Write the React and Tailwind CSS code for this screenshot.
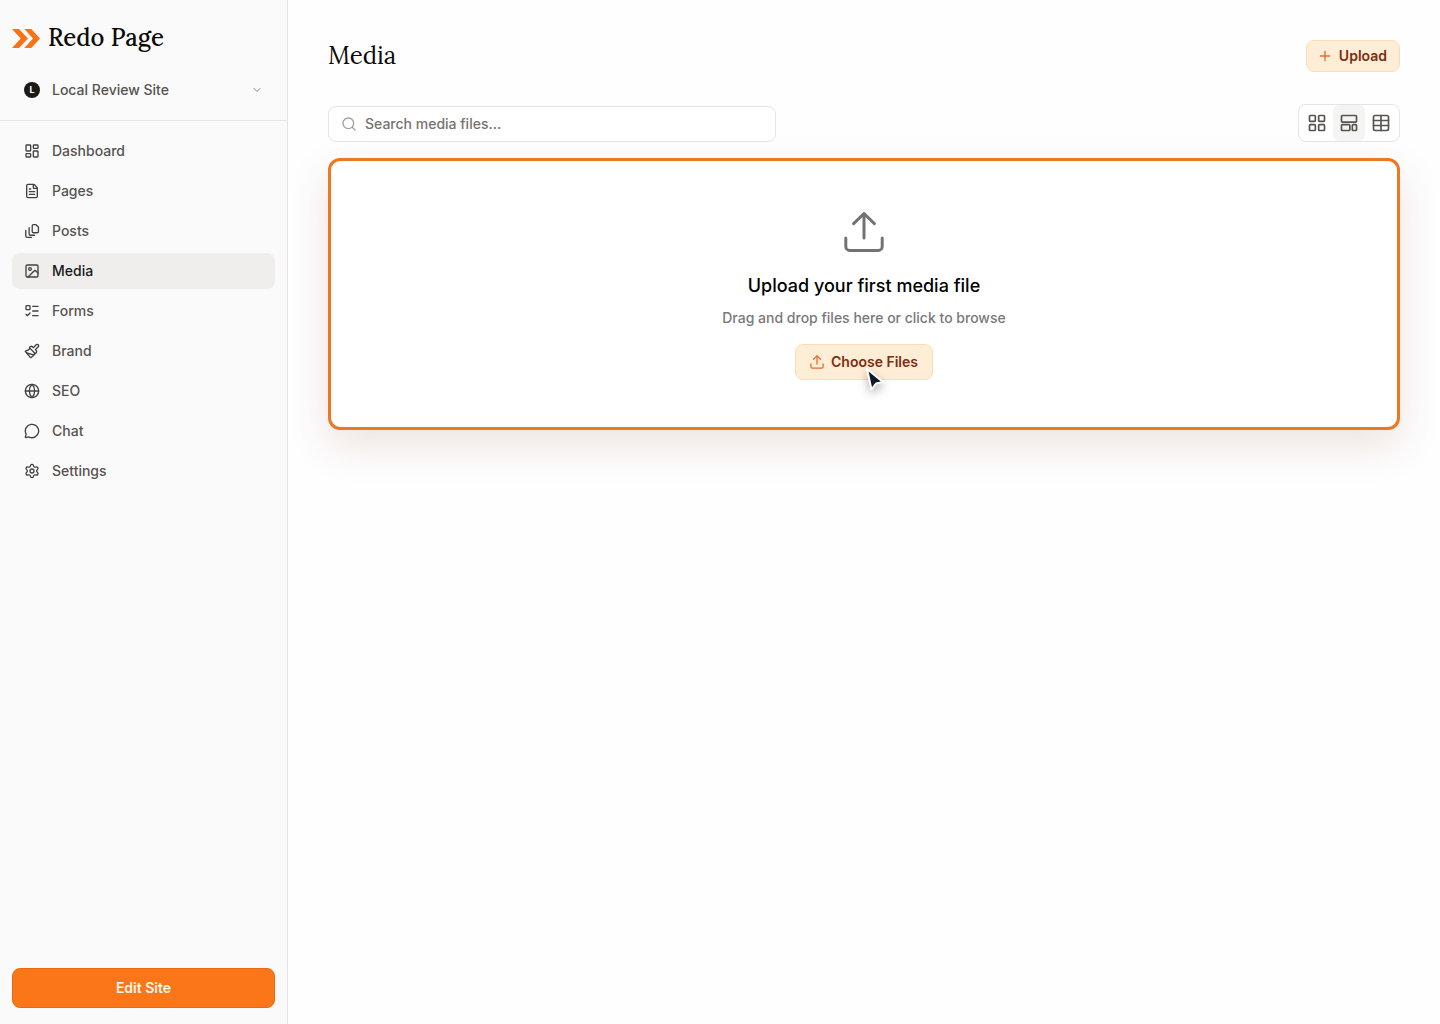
import React, { useState } from 'react';
import {
    ChevronDown,
    FileText,
    Globe,
    Image,
    LayoutDashboard,
    LayoutGrid,
    ListTodo,
    MessageCircle,
    Paintbrush,
    Plus,
    Search,
    Settings,
    Table
} from 'lucide-react';

const PostsIcon = ({ className }) => (
    <svg
        className={className}
        viewBox="0 0 18 18"
        fill="none"
        stroke="currentColor"
        strokeWidth="1.5"
        strokeLinecap="round"
        strokeLinejoin="round"
    >
        <path d="M10.75 1.75h2.5l3 3v4.75a1.5 1.5 0 0 1-1.5 1.5h-4a1.5 1.5 0 0 1-1.5-1.5V3.25a1.5 1.5 0 0 1 1.5-1.5z" />
        <path d="M5.75 5.25v7a1.5 1.5 0 0 0 1.5 1.5h4.5" />
        <path d="M2 8.25v6.5a1.5 1.5 0 0 0 1.5 1.5h4.75" />
    </svg>
);

const UploadIcon = ({ className, strokeWidth = 1.5 }) => (
    <svg
        className={className}
        viewBox="0 0 24 24"
        fill="none"
        stroke="currentColor"
        strokeWidth={strokeWidth}
        strokeLinecap="round"
        strokeLinejoin="round"
    >
        <path d="M12 15V3" />
        <path d="M6.8 7.8 12 2.8l5.2 5" />
        <path d="M2.9 15v4.2a2 2 0 0 0 2 2h14.2a2 2 0 0 0 2-2V15" />
    </svg>
);

const MasonryIcon = ({ className, strokeWidth }) => (
    <svg
        className={className}
        viewBox="0 0 24 24"
        fill="none"
        stroke="currentColor"
        strokeWidth={strokeWidth}
        strokeLinejoin="round"
    >
        <rect x="3" y="3" width="18" height="8" rx="1" />
        <rect x="3" y="14" width="10" height="7" rx="1" />
        <rect x="16" y="14" width="5" height="7" rx="1" />
    </svg>
);

const Cursor = () => (
    <svg
        className="pointer-events-none absolute top-5 left-[68px] h-[30px] w-6 drop-shadow-[0_4px_5px_rgba(0,0,0,0.3)]"
        viewBox="0 0 24 30"
        aria-hidden="true"
    >
        <path d="M4 5l4.5 20.5 4.5-6 7-1.5z" fill="#111827" stroke="#fff" strokeWidth="2" strokeLinejoin="round" />
    </svg>
);

const navItems = [
    { label: 'Dashboard', icon: LayoutDashboard },
    { label: 'Pages', icon: FileText },
    { label: 'Posts', icon: PostsIcon },
    { label: 'Media', icon: Image },
    { label: 'Forms', icon: ListTodo },
    { label: 'Brand', icon: Paintbrush },
    { label: 'SEO', icon: Globe },
    { label: 'Chat', icon: MessageCircle },
    { label: 'Settings', icon: Settings }
];

const views = [
    { id: 'grid', label: 'Grid view', icon: LayoutGrid },
    { id: 'masonry', label: 'Masonry view', icon: MasonryIcon },
    { id: 'table', label: 'Table view', icon: Table }
];

const Sidebar = () => (
    <aside className="flex w-72 shrink-0 flex-col border-r border-[#e7e5e4] bg-[#fafafa]">
        <div className="border-b border-[#e7e5e4] px-3 pt-5 pb-3">
            <a href="#" className="flex h-9 items-center gap-2">
                <svg className="h-[19px] w-7" viewBox="0 0 28 19" fill="#f97316" aria-hidden="true">
                    <path d="M0 0h7L16 9.5 7 19H0l8.7-9.5z" />
                    <path d="M12.3 0h7L28 9.5 19.3 19h-7l8.7-9.5z" />
                </svg>
                <span className="font-[Lora,'Liberation_Serif',serif] text-2xl font-medium text-[#0c0a09]">Redo Page</span>
            </a>
            <div className="mt-4 flex h-9 items-center gap-3 px-3">
                <span className="flex size-4 items-center justify-center rounded-full bg-[#1c1917] text-[9px] font-bold text-white">
                    L
                </span>
                <select
                    aria-label="Site"
                    className="min-w-0 flex-1 appearance-none bg-transparent text-sm font-medium text-[#57534e] outline-none"
                >
                    <option>Local Review Site</option>
                </select>
                <ChevronDown className="size-3 text-[#8a8580]" />
            </div>
        </div>
        <nav className="flex flex-1 flex-col gap-1 p-3">
            {navItems.map(({ label, icon: Icon }) => (
                <a
                    key={label}
                    href="#"
                    className={
                        label === 'Media'
                            ? 'flex h-9 items-center gap-3 rounded-lg bg-[#efeeed] px-3 text-sm font-medium text-[#1c1917]'
                            : 'flex h-9 items-center gap-3 rounded-lg px-3 text-sm font-medium text-[#57534e]'
                    }
                >
                    <Icon className="size-4 text-[#44403c]" />
                    {label}
                </a>
            ))}
        </nav>
        <div className="px-3 pb-4">
            <button className="h-10 w-full rounded-lg border border-[#ea6a10] bg-[#fb7619] text-sm font-semibold text-[#fff7ed]">
                Edit Site
            </button>
        </div>
    </aside>
);

export default function App() {
    const [view, setView] = useState('masonry');

    return (
        <div className="flex min-h-screen bg-[#fefefe] font-[Inter,sans-serif]">
            <Sidebar />
            <main className="min-w-0 flex-1 p-10">
                <header className="flex h-8 items-center justify-between">
                    <h1 className="font-[Lora,'Liberation_Serif',serif] text-2xl text-[#0c0a09]">Media</h1>
                    <button className="flex h-8 items-center gap-1.5 rounded-lg border border-[#fddcb5] bg-[#ffedd5] pr-3 pl-2.5 text-sm font-semibold text-[#7c2d12]">
                        <Plus className="size-4 text-[#ea6a35]" strokeWidth={2} />
                        Upload
                    </button>
                </header>

                <div className="mt-8 flex items-end justify-between">
                    <label className="flex h-9 w-full max-w-md items-center gap-2 rounded-lg border border-[#e4e4e4] bg-white px-3">
                        <Search className="size-4 text-[#a3a09d]" strokeWidth={2} />
                        <input
                            type="text"
                            aria-label="Search media files"
                            placeholder="Search media files..."
                            className="min-w-0 flex-1 text-sm font-medium outline-none placeholder:text-[#78716c]"
                        />
                    </label>
                    <div className="flex rounded-lg border border-[#e4e4e4] bg-white px-0.5">
                        {views.map(({ id, label, icon: Icon }) => (
                            <button
                                key={id}
                                aria-label={label}
                                aria-pressed={view === id}
                                onClick={() => setView(id)}
                                className={
                                    view === id
                                        ? 'flex h-9 w-8 items-center justify-center rounded-md bg-[#f4f4f3] text-[#57534e]'
                                        : 'flex h-9 w-8 items-center justify-center rounded-md text-[#57534e]'
                                }
                            >
                                <Icon className="size-5" strokeWidth={2} />
                            </button>
                        ))}
                    </div>
                </div>

                <section className="mt-4 flex flex-col items-center rounded-xl border-[3px] border-[#ee7722] bg-white py-[47px] shadow-[0_16px_40px_rgba(124,45,18,0.13)]">
                    <UploadIcon className="size-12 text-[#737373]" />
                    <h2 className="mt-4 text-lg font-medium text-black">Upload your first media file</h2>
                    <p className="mt-2 text-sm font-medium text-[#78787a]">Drag and drop files here or click to browse</p>
                    <div className="relative mt-4">
                        <button className="flex h-9 items-center gap-1.5 rounded-lg border border-[#fddcb5] bg-[#ffedd5] pr-3.5 pl-[13px] text-sm font-semibold text-[#7c2d12]">
                            <UploadIcon className="size-4 text-[#ea6a35]" strokeWidth={2} />
                            Choose Files
                        </button>
                        <Cursor />
                    </div>
                </section>
            </main>
        </div>
    );
}
